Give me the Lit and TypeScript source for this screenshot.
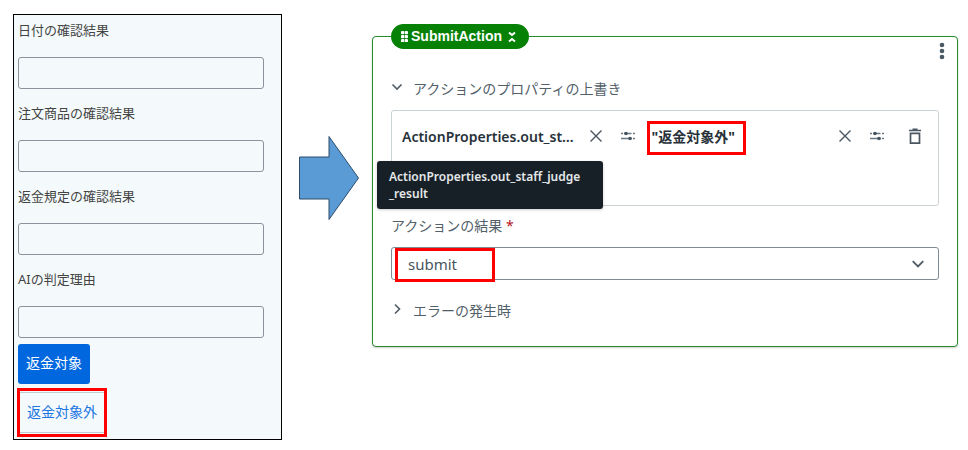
import { LitElement, html, svg, css } from "lit";
import { customElement, property } from "lit/decorators.js";

const closeIcon = html`<svg width="14" height="14" viewBox="0 0 14 14" aria-hidden="true">
  <path d="M1.5 1.5 12.5 12.5M12.5 1.5 1.5 12.5" fill="none" stroke="#4a5761" stroke-width="1.4" />
</svg>`;

const slidersIcon = html`<svg width="16" height="12" viewBox="0 0 16 12" aria-hidden="true">
  <path d="M1 3.5h2M4 3.5h7.5M13 3.5h2M1 8.5h7.500M8 8.5h4M13 8.500h2" fill="none" stroke="#6b7881" stroke-width="1.4" />
  <circle cx="6" cy="3.500" r="1.800" fill="#46535d" />
  <circle cx="10" cy="8.500" r="1.800" fill="#46535d" />
</svg>`;

const trashIcon = html`<svg width="14" height="18" viewBox="0 0 14 18" aria-hidden="true">
  <path d="M1 3.500h12M4.500 2.300h5" fill="none" stroke="#4a5761" stroke-width="1.700" />
  <path d="M2.500 6.300v9.900h9V6.300z" fill="none" stroke="#4a5761" stroke-width="1.700" />
</svg>`;

const chevron = (d: string, size = 12) => html`<svg width=${size} height=${size} viewBox="0 0 12 12" aria-hidden="true">
  ${svg`<path d=${d} fill="none" stroke="#4f5c66" stroke-width="1.600" />`}
</svg>`;
const DOWN = "M1.500 3.500 6 8 10.500 3.500";
const RIGHT = "M4 1.500 8.500 6 4 10.500";

const shared = css`
  * {
    box-sizing: border-box;
  }
  button,
  input,
  select {
    font: inherit;
    color: inherit;
    margin: 0;
  }
  button {
    cursor: pointer;
    padding: 0;
    border: 0;
    background: none;
  }
`;

@customElement("review-form")
export class ReviewForm extends LitElement {
  static styles = [
    shared,
    css`
      :host {
        display: block;
        border: 1px solid #000;
        background: #f4fafb;
        padding: 5px 17px 2px 3px;
        color: #444;
        font-size: 14px;
        line-height: 20px;
      }
      .fields {
        display: flex;
        flex-direction: column;
        gap: 14px;
        padding-left: 1px;
      }
      .field {
        display: flex;
        flex-direction: column;
        gap: 17px;
      }
      .label {
        font-size: 13px;
      }
      .input {
        width: 100%;
        height: 32px;
        padding: 0 8px;
        border: 1px solid #8a929c;
        border-radius: 3px;
        background: transparent;
      }
      .actions {
        display: flex;
        flex-direction: column;
        align-items: flex-start;
        gap: 4px;
        margin-top: 6px;
      }
      .primary {
        height: 40px;
        margin-left: 1px;
        padding: 0 8px 2px;
        border-radius: 3px;
        background: #0067df;
        color: #fff;
      }
      .marked {
        border: 3px solid #f00;
        padding: 1px 0;
      }
      .secondary {
        display: block;
        height: 41px;
        padding: 0 7px 2px;
        border: 1px solid #c0cbd0;
        border-width: 1px 0;
        color: #1b75e4;
      }
    `,
  ];

  private labels = ["日付の確認結果", "注文商品の確認結果", "返金規定の確認結果", "AIの判定理由"];

  render() {
    return html`
      <div class="fields">
        ${this.labels.map(
          (label, i) => html`<div class="field">
            <label class="label" for="field-${i}">${label}</label>
            <input class="input" id="field-${i}" type="text" />
          </div>`
        )}
      </div>
      <div class="actions">
        <button class="primary" type="button">返金対象</button>
        <div class="marked"><button class="secondary" type="button">返金対象外</button></div>
      </div>
    `;
  }
}

@customElement("value-entry")
export class ValueEntry extends LitElement {
  static styles = [
    shared,
    css`
      :host {
        display: flex;
        align-items: center;
        gap: 8px;
        min-width: 0;
      }
      .slot {
        flex: 1;
        min-width: 0;
      }
      .value {
        display: block;
        width: 100%;
        height: 28px;
        padding: 0;
        border: 0;
        background: none;
        color: #273139;
        font-weight: 600;
        text-overflow: ellipsis;
      }
      .marked {
        width: 99px;
        margin-bottom: -4px;
        border: 3px solid #f00;
        padding: 0 2px;
      }
      .marked .value {
        padding-bottom: 4px;
        font-weight: 700;
      }
      .icon {
        display: grid;
        place-items: center;
        width: 24px;
        height: 24px;
      }
    `,
  ];

  @property() value = "";
  @property() label = "";
  @property({ type: Boolean }) marked = false;

  render() {
    return html`
      <div class="slot">
        <div class=${this.marked ? "marked" : ""}>
          <input class="value" type="text" readonly aria-label=${this.label} .value=${this.value} />
        </div>
      </div>
      <button class="icon" type="button" aria-label="クリア">${closeIcon}</button>
      <button class="icon" type="button" aria-label="設定">${slidersIcon}</button>
    `;
  }
}

@customElement("action-card")
export class ActionCard extends LitElement {
  static styles = [
    shared,
    css`
      :host {
        display: block;
        position: relative;
        border: 1px solid #268c2a;
        border-radius: 4px;
        padding: 42px 18px 25px;
        background: #fff;
        box-shadow: 0 1px 2px #0003;
        color: #526069;
        font-size: 14px;
        line-height: 20px;
      }
      .badge {
        position: absolute;
        top: -13px;
        left: 18px;
        display: flex;
        align-items: center;
        gap: 3px;
        height: 25px;
        padding: 0 13px 0 10px;
        border-radius: 13px;
        background: #068106;
        color: #fff;
        font: bold 14px/24px "Liberation Sans", Arial, sans-serif;
      }
      .badge-name {
        padding-bottom: 2px;
      }
      .collapse {
        display: flex;
        margin-left: 3px;
      }
      .menu {
        position: absolute;
        top: 4px;
        right: 7px;
        display: grid;
        place-items: center;
        width: 16px;
        height: 20px;
      }
      .toggle {
        display: flex;
        align-items: center;
        gap: 10px;
      }
      .toggle svg {
        margin-bottom: 4px;
      }
      .list {
        position: relative;
        height: 96px;
        margin: 11px 0 10px;
        padding: 10px 11px 0 10px;
        border: 1px solid #cbd2d6;
        border-radius: 3px;
      }
      .row {
        display: flex;
        align-items: center;
      }
      .property {
        flex: 1 1 0;
        margin-right: 7px;
      }
      .operand {
        flex: 1 1 5px;
      }
      .delete {
        display: grid;
        place-items: center;
        width: 24px;
        height: 24px;
        margin-left: 14px;
      }
      .tooltip {
        position: absolute;
        top: 50px;
        left: -15px;
        width: 226px;
        padding: 7px 8px 7px 12px;
        border-radius: 3px;
        background: #182027;
        box-shadow: 0 1px 3px #0003;
        color: #e4e8ea;
        font-size: 12px;
        font-weight: 600;
        line-height: 17px;
      }
      .label {
        display: block;
      }
      .required {
        color: #b01822;
      }
      .select-wrap {
        position: relative;
        display: grid;
        margin: 11px 0 21px;
      }
      .select {
        appearance: none;
        width: 100%;
        height: 33px;
        padding: 0 40px 0 16px;
        border: 1px solid #7f8b94;
        border-radius: 3px;
        background: #fff;
        color: #47545d;
        font-size: 15px;
      }
      .caret {
        position: absolute;
        right: 14px;
        top: 10px;
        display: flex;
        pointer-events: none;
      }
      .highlight {
        position: absolute;
        left: 4px;
        top: 1px;
        width: 100px;
        height: 34px;
        border: 3px solid #f00;
        pointer-events: none;
      }
    `,
  ];

  render() {
    return html`
      <div class="badge">
        <svg width="7" height="11" viewBox="0 0 7 11" fill="#fff" aria-hidden="true">
          ${[0, 4, 8].map((y) => svg`<rect x="0" y=${y} width="3.300" height="3.300" rx="1" /><rect x="3.700" y=${y} width="3.300" height="3.300" rx="1" />`)}
        </svg>
        <span class="badge-name">SubmitAction</span>
        <button class="collapse" type="button" aria-label="折りたたむ">
          <svg width="8" height="12" viewBox="0 0 8 12" aria-hidden="true">
            <path d="M1 1.500 4 4 7 1.500M1 10.500 4 8 7 10.500" fill="none" stroke="#fff" stroke-width="2" />
          </svg>
        </button>
      </div>
      <button class="menu" type="button" aria-label="メニュー">
        <svg width="6" height="18" viewBox="0 0 6 18" fill="#4b5964" aria-hidden="true">
          <circle cx="3" cy="3" r="2.300" /><circle cx="3" cy="9" r="2.300" /><circle cx="3" cy="15" r="2.300" />
        </svg>
      </button>

      <button class="toggle" type="button" aria-expanded="true">${chevron(DOWN)}<span>アクションのプロパティの上書き</span></button>
      <div class="list">
        <div class="row">
          <value-entry class="property" label="プロパティ" value="ActionProperties.out_staff_judge_result"></value-entry>
          <value-entry class="operand" label="値" value='"返金対象外"' marked></value-entry>
          <button class="delete" type="button" aria-label="削除">${trashIcon}</button>
        </div>
        <div class="tooltip" role="tooltip">ActionProperties.out_staff_judge<br />_result</div>
      </div>

      <label class="label" for="result">アクションの結果 <span class="required">*</span></label>
      <div class="select-wrap">
        <select class="select" id="result"><option>submit</option></select>
        <span class="caret">${chevron(DOWN, 14)}</span>
        <span class="highlight"></span>
      </div>

      <button class="toggle" type="button" aria-expanded="false">${chevron(RIGHT)}<span>エラーの発生時</span></button>
    `;
  }
}

@customElement("app-root")
export class AppRoot extends LitElement {
  static styles = css`
    :host {
      display: grid;
      grid-template-columns: minmax(200px, 269px) 60px minmax(0, 1fr);
      align-items: start;
      padding: 14px 10px 10px 13px;
      font-family: "Noto Sans", "Noto Sans CJK JP", sans-serif;
      background: #fff;
    }
    .arrow {
      width: 60px;
      margin: 121px 0 0 17px;
    }
    .card {
      margin: 22px 0 0 30px;
    }
  `;

  render() {
    return html`
      <review-form></review-form>
      <svg class="arrow" height="87" viewBox="0 0 60 87" aria-hidden="true">
        <path d="M.5 22H30V1.500L59.500 43 30 84.500V64H.5z" fill="#5b9bd5" stroke="#2f4d6b" />
      </svg>
      <action-card class="card"></action-card>
    `;
  }
}
